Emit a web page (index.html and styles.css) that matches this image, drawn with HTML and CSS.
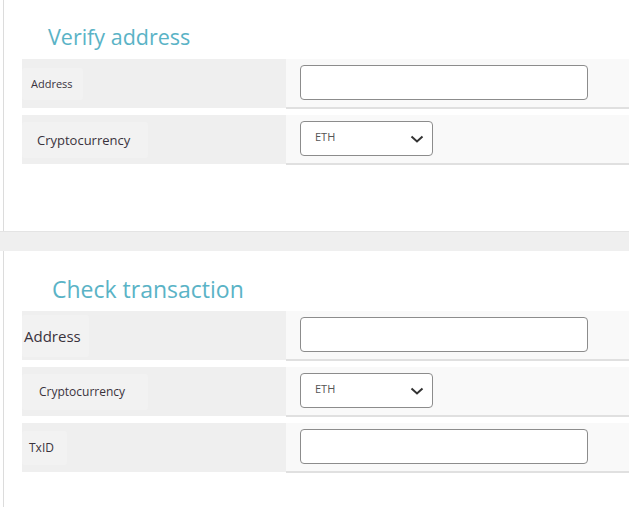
FILE: index.html
```html
<!DOCTYPE html>
<html>
<head>
<meta charset="utf-8">
<link rel="stylesheet" href="styles.css">
</head>
<body>
<div class="page">
  <section class="card card-verify">
    <h2 class="title title-verify">Verify address</h2>
    <div class="rows">
      <div class="row">
        <div class="label-cell"><span class="label l-addr1">Address</span></div>
        <div class="field-cell"><div class="input"></div></div>
      </div>
      <div class="row">
        <div class="label-cell"><span class="label l-crypto1">Cryptocurrency</span></div>
        <div class="field-cell">
          <div class="select"><span class="select-text">ETH</span>
            <svg class="chev" width="14" height="8" viewBox="0 0 14 8"><polyline points="1.5,1.5 7,6.5 12.5,1.5" fill="none" stroke="#333" stroke-width="2"/></svg>
          </div>
        </div>
      </div>
    </div>
  </section>
  <div class="band"></div>
  <section class="card card-check">
    <h2 class="title title-check">Check transaction</h2>
    <div class="rows">
      <div class="row">
        <div class="label-cell"><span class="label l-addr2">Address</span></div>
        <div class="field-cell"><div class="input"></div></div>
      </div>
      <div class="row">
        <div class="label-cell"><span class="label l-crypto2">Cryptocurrency</span></div>
        <div class="field-cell">
          <div class="select"><span class="select-text">ETH</span>
            <svg class="chev" width="14" height="8" viewBox="0 0 14 8"><polyline points="1.5,1.5 7,6.5 12.5,1.5" fill="none" stroke="#333" stroke-width="2"/></svg>
          </div>
        </div>
      </div>
      <div class="row">
        <div class="label-cell"><span class="label l-txid">TxID</span></div>
        <div class="field-cell"><div class="input"></div></div>
      </div>
    </div>
  </section>
</div>
</body>
</html>
```

FILE: styles.css
```css
* { box-sizing: border-box; }
html, body { margin: 0; padding: 0; background: #fff; }
body {
  font-family: "Open Sans", "Noto Sans", sans-serif;
  color: #3a333d;
  width: 629px;
  height: 507px;
  overflow: hidden;
}
.page { display: flex; flex-direction: column; width: 629px; }
.card {
  margin-left: 3px;
  border-left: 1px solid #dcdcdc;
  background: #fff;
}
.card-verify { height: 231px; padding-top: 22px; }
.card-check { height: 256px; padding-top: 23px; }
.band {
  height: 20px;
  background: #efefef;
  border-top: 1px solid #e4e4e4;
}
.title {
  margin: 0;
  font-weight: 400;
  font-size: 22px;
  line-height: 30px;
  color: #5ab3c6;
}
.title-verify { margin-left: 44px; margin-bottom: 7px; font-size: 21.5px; }
.title-check { margin-left: 48px; margin-bottom: 7px; font-size: 23px; }
.rows {
  display: flex;
  flex-direction: column;
  gap: 6px;
  margin-left: 18px;
}
.row {
  display: flex;
  height: 50px;
}
.label-cell {
  width: 264px;
  height: 49px;
  background: #efefef;
  display: flex;
  align-items: center;
}
.label {
  display: flex;
  align-items: center;
  background: #f2f2f2;
  border-radius: 3px;
}
.l-addr1 { font-size: 11px; height: 32px; padding: 0 10px 0 9px; }
.l-crypto1 { font-size: 13px; height: 36px; padding: 0 18px 0 15px; }
.l-addr2 { font-size: 15px; height: 42px; padding: 0 8px 0 2px; }
.l-crypto2 { font-size: 12px; height: 36px; padding: 0 23px 0 17px; }
.l-txid { font-size: 12px; height: 34px; padding: 0 13px 0 7px; }
.field-cell {
  flex: 1;
  background: #f9f9f9;
  border-bottom: 2px solid #e0e0e0;
  padding: 6px 0 0 14px;
}
.input {
  width: 288px;
  height: 35px;
  background: #fff;
  border: 1px solid #8c8c8c;
  border-radius: 4px;
}
.select {
  width: 133px;
  height: 35px;
  background: #fff;
  border: 1px solid #8c8c8c;
  border-radius: 4px;
  display: flex;
  align-items: center;
  justify-content: space-between;
  padding: 0 8px 0 14px;
}
.select-text {
  font-size: 11px;
  color: #555;
  margin-top: -4px;
}
.chev { display: block; margin-top: 1px; }
```
